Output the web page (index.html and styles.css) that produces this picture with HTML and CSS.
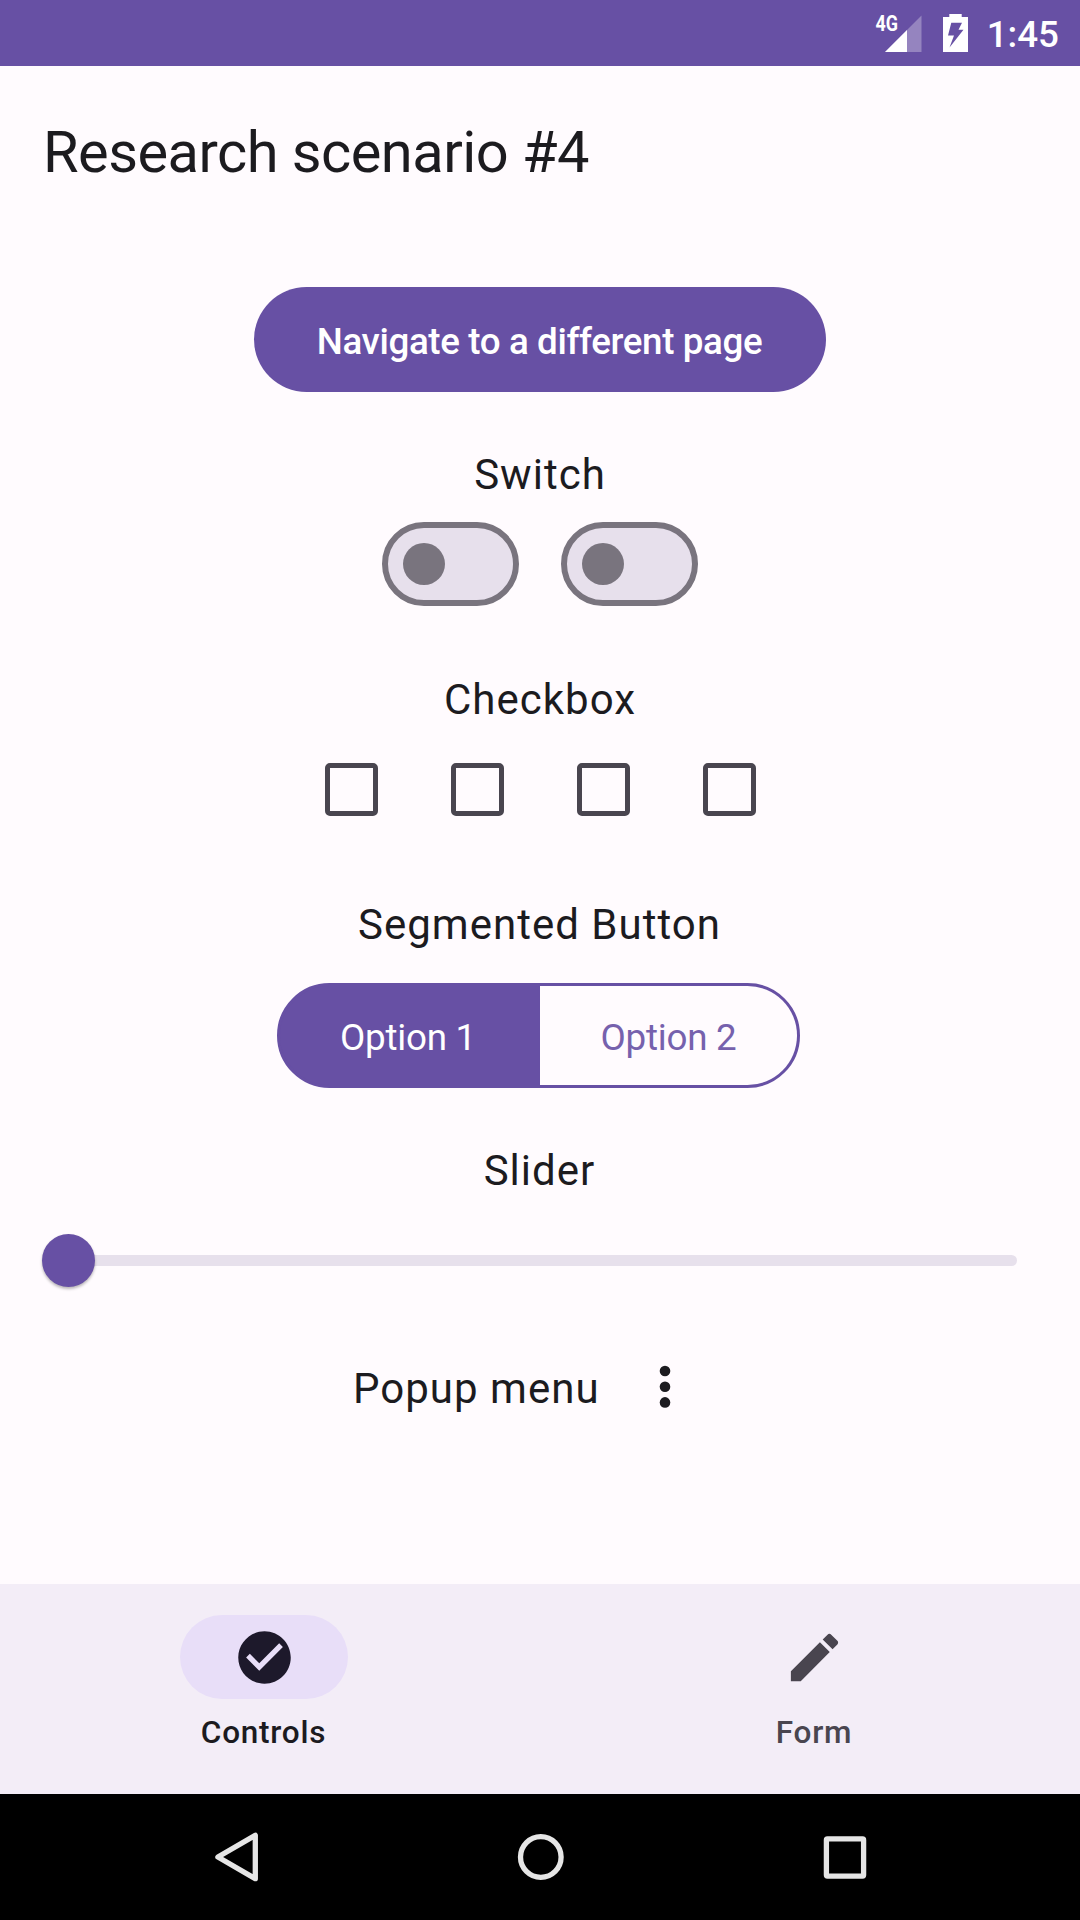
FILE: index.html
```html
<!DOCTYPE html>
<html lang="en">
<head>
<meta charset="utf-8">
<title>Research scenario #4</title>
<link rel="stylesheet" href="styles.css">
</head>
<body>
<div class="screen">
  <header class="status-bar">
    <svg class="signal" width="50" height="48" viewBox="-2 -8 50 48">
      <path d="M46.5 1.5V38H10z" fill="#fff" fill-opacity=".3"/>
      <path d="M32 16V38H10z" fill="#fff"/>
      <text class="network" x="0.5" y="17" textLength="22.5" lengthAdjust="spacingAndGlyphs">4G</text>
    </svg>
    <svg class="battery" width="25" height="38" viewBox="0 0 25 38">
      <path fill="#fff" fill-rule="evenodd" d="M6.3 0H18.7V3H25V38H0V3H6.3zM8.3 8.7L5 21.5H11L6.5 33.5L20.5 15.7H15.5L19 8.7z"/>
    </svg>
    <span class="clock">1:45</span>
  </header>

  <main class="content">
    <h1 class="title">Research scenario #4</h1>
    <button class="primary-button">Navigate to a different page</button>

    <h2 class="label switch-label">Switch</h2>
    <div class="switches">
      <span class="switch"><span class="switch-thumb"></span></span>
      <span class="switch"><span class="switch-thumb"></span></span>
    </div>

    <h2 class="label checkbox-label">Checkbox</h2>
    <div class="checkboxes">
      <span class="checkbox"></span>
      <span class="checkbox"></span>
      <span class="checkbox"></span>
      <span class="checkbox"></span>
    </div>

    <h2 class="label segmented-label">Segmented Button</h2>
    <div class="segmented">
      <span class="segment selected">Option 1</span>
      <span class="segment">Option 2</span>
    </div>

    <h2 class="label slider-label">Slider</h2>
    <div class="slider">
      <span class="slider-thumb"></span>
      <span class="slider-track"></span>
    </div>

    <div class="popup-row">
      <span class="label popup-label">Popup menu</span>
      <svg class="more" width="12" height="44" viewBox="0 0 12 44" fill="#1c1b1f">
        <circle cx="6" cy="6" r="5.3"/>
        <circle cx="6" cy="21.7" r="5.3"/>
        <circle cx="6" cy="37.4" r="5.3"/>
      </svg>
    </div>
  </main>

  <nav class="tabs">
    <div class="tab active">
      <span class="indicator">
        <svg width="63" height="63" viewBox="0 0 24 24" fill="currentColor"><path d="M12 2C6.48 2 2 6.48 2 12s4.48 10 10 10 10-4.48 10-10S17.52 2 12 2zm-2 15l-5-5 1.41-1.41L10 14.17l7.59-7.59L19 8l-9 9z"/></svg>
      </span>
      <span class="tab-label">Controls</span>
    </div>
    <div class="tab">
      <span class="indicator">
        <svg width="63" height="63" viewBox="0 0 24 24" fill="currentColor"><path d="M3 17.25V21h3.75L17.81 9.94l-3.75-3.75L3 17.25zM20.71 7.04c.39-.39.39-1.02 0-1.41l-2.34-2.34c-.39-.39-1.02-.39-1.41 0l-1.83 1.83 3.75 3.75 1.83-1.83z"/></svg>
      </span>
      <span class="tab-label">Form</span>
    </div>
  </nav>

  <footer class="system-bar">
    <svg width="44" height="52" viewBox="0 0 44 52" fill="none" stroke="#e6e6e6" stroke-width="5.3" stroke-linejoin="round"><path d="M40.3 4.3V47.7L2.9 26z"/></svg>
    <svg width="48" height="48" viewBox="0 0 48 48" fill="none" stroke="#e6e6e6" stroke-width="5.3"><circle cx="23.8" cy="24" r="20.3"/></svg>
    <svg width="44" height="44" viewBox="0 0 44 44" fill="none" stroke="#e6e6e6" stroke-width="5.3"><rect x="3.4" y="3.9" width="37.2" height="37.2" rx="1"/></svg>
  </footer>
</div>
</body>
</html>
```
FILE: styles.css
```css
* { box-sizing: border-box; }

body {
  margin: 0;
  background: #fffbfe;
  color: #1c1b1f;
  font-family: Roboto, sans-serif;
}

svg { display: block; flex: none; }

.screen {
  display: flex;
  flex-direction: column;
  width: 1080px;
  height: 1920px;
  overflow: hidden;
}

.status-bar {
  display: flex;
  align-items: flex-start;
  justify-content: flex-end;
  height: 66px;
  padding-right: 21px;
  background: #6750a4;
  color: #fff;
}

.signal { margin: 5.5px 20px 0 0; }
.network { fill: #fff; font-size: 22px; font-weight: 700; }
.battery { margin: 14px 19px 0 0; }
.clock { font-size: 36.75px; font-weight: 500; line-height: 69px; }

.content {
  display: flex;
  flex: 1;
  flex-direction: column;
  align-items: center;
  padding-top: 49px;
}

.title {
  align-self: flex-start;
  margin: 0 0 98px 43px;
  font-size: 57.75px;
  font-weight: 400;
  line-height: 74px;
  letter-spacing: -.52px;
}

.primary-button {
  width: 572px;
  height: 105px;
  padding: 4px 1px 0 0;
  border: 0;
  border-radius: 53px;
  background: #6750a4;
  color: #fff;
  font: 500 36.75px/52px Roboto, sans-serif;
  letter-spacing: -.38px;
}

.label {
  margin: 0;
  font-size: 42px;
  font-weight: 400;
  line-height: 63px;
  letter-spacing: 1.02px;
}

.switch-label { margin-top: 51px; }
.checkbox-label { margin-top: 62px; }
.segmented-label { margin: 77px 1px 0 0; }
.slider-label { margin: 51px 1px 0 0; }

.switches { display: flex; gap: 42px; margin-top: 16px; }

.switch {
  display: flex;
  align-items: center;
  width: 137px;
  height: 84px;
  padding-left: 15px;
  border: 6px solid #79747e;
  border-radius: 42px;
  background: #e7e0ec;
}

.switch-thumb {
  width: 42px;
  height: 42px;
  border-radius: 50%;
  background: #79747e;
}

.checkboxes { display: flex; gap: 73px; margin-top: 32px; }

.checkbox {
  width: 53px;
  height: 53px;
  border: 5px solid #49454f;
  border-radius: 5px;
}

.segmented {
  display: flex;
  width: 523px;
  height: 105px;
  margin: 27px 3px 0 0;
  overflow: hidden;
  border: 3px solid #6750a4;
  border-radius: 53px;
  background: #6750a4;
}

.segment {
  flex: 1;
  padding-top: 1px;
  background: #fffbfe;
  color: #7661ad;
  font-size: 36.75px;
  line-height: 101px;
  letter-spacing: -.25px;
  text-align: center;
}

.segment.selected {
  flex: none;
  width: 260px;
  padding-right: 4px;
  background: #6750a4;
  color: #fff;
}

.slider {
  display: flex;
  align-items: center;
  align-self: stretch;
  height: 53px;
  margin: 32px 63.5px 0 42px;
}

.slider-thumb {
  z-index: 1;
  width: 53px;
  height: 53px;
  border-radius: 50%;
  background: #6750a4;
  box-shadow: 0 2px 3px rgba(0, 0, 0, .28);
}

.slider-track {
  flex: 1;
  height: 10.5px;
  margin-left: -6px;
  border-radius: 6px;
  background: #e7e0ec;
}

.popup-row {
  display: flex;
  align-items: flex-start;
  align-self: flex-start;
  margin: 70px 0 0 353px;
}

.popup-label { width: 246px; white-space: nowrap; }
.more { margin: 7.7px 0 0 60px; }

.tabs {
  display: flex;
  gap: 22px;
  height: 210px;
  padding-right: 2px;
  background: #f3edf7;
}

.tab {
  display: flex;
  flex: 1;
  flex-direction: column;
  align-items: center;
  padding-top: 31px;
  color: #49454f;
}

.indicator {
  display: flex;
  align-items: center;
  justify-content: center;
  width: 168px;
  height: 84px;
  border-radius: 42px;
}

.active { color: #1c1b1f; }
.active .indicator { background: #e8def8; color: #1d192b; }

.tab-label {
  margin-top: 13px;
  font-size: 31.5px;
  font-weight: 500;
  line-height: 42px;
  letter-spacing: .75px;
}

.active .tab-label { padding-right: 1px; }

.system-bar {
  display: flex;
  align-items: center;
  gap: 258px;
  height: 126px;
  padding-left: 215px;
  background: #000;
}
```
